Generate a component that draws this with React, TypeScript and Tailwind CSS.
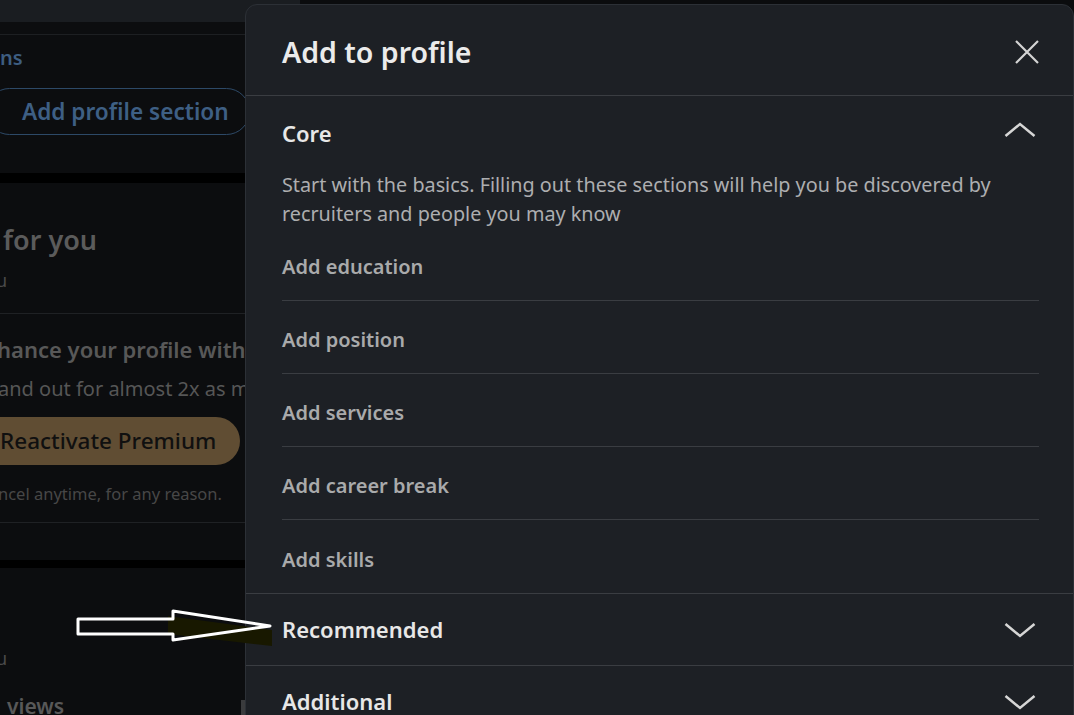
import React from "react";

function Chevron({ up }: { up?: boolean }) {
  return (
    <svg width="32" height="18" viewBox="0 0 32 18" fill="none" stroke="#d6d6d6" strokeWidth="2.5" strokeLinejoin="miter">
      {up ? <path d="M1.5 15 L16 3 L30.5 15" /> : <path d="M1.5 3 L16 15 L30.5 3" />}
    </svg>
  );
}

function Item({ label, last }: { label: string; last?: boolean }) {
  return (
    <div
      className={`h-[73px] pt-[6px] flex items-center ${last ? "h-[72px]" : "border-b border-[#3a3d42]"}`}
    >
      <span className="text-[20px] font-semibold text-[#a9aaab]">{label}</span>
    </div>
  );
}

function Section({ title, up }: { title: string; up?: boolean }) {
  return (
    <div className="h-[72px] pl-9 pr-[37px] flex items-center justify-between border-b border-[#3a3d42]">
      <span className="text-[22px] font-semibold text-[#e7e7e7]">{title}</span>
      <Chevron up={up} />
    </div>
  );
}

export default function App() {
  return (
    <div
      className="relative w-[1074px] h-[715px] overflow-hidden bg-[#0b0c0e]"
      style={{ fontFamily: '"Noto Sans", "Open Sans", sans-serif' }}
    >
      {/* dimmed page behind the modal */}
      <div className="w-[300px] flex flex-col">
        <div className="h-[22px] bg-[#1a1d21]" />
        <div className="h-[151px] bg-[#0c0d0f] flex flex-col">
          <div className="h-[13px] border-b border-[#1d1f22]" />
          <div className="mt-[9px] text-[20px] font-semibold text-[#3d5d80] leading-[28px]">ns</div>
          <div className="mt-[16px] -ml-[14px] w-[264px] h-[47px] rounded-full border-[1.5px] border-[#2d4967] flex items-center pl-[35px]">
            <span className="text-[22.6px] font-semibold text-[#3e5f84]">Add profile section</span>
          </div>
        </div>
        <div className="h-[10px] bg-black" />
        <div className="h-[377px] bg-[#0c0d0f] flex flex-col">
          <div className="mt-[39px] text-[27px] font-semibold text-[#5b5b5b] leading-[36px] pl-[3px]">for you</div>
          <div className="mt-[11px] text-[18px] text-[#4a4a4a] leading-[22px] -ml-[4px]">u</div>
          <div className="mt-[22px] border-b border-[#1f2124]" />
          <div className="mt-[20px] text-[22px] font-semibold text-[#585858] leading-[30px] whitespace-nowrap -ml-[3px]">hance your profile with</div>
          <div className="mt-[11px] text-[20px] text-[#565656] leading-[28px] whitespace-nowrap -ml-[2px]">and out for almost 2x as many</div>
          <div className="mt-[14px] -ml-[30px] w-[270px] h-[48px] rounded-full bg-[#604d33] flex items-center pl-[30px]">
            <span className="text-[22.5px] font-medium text-[#101010]">Reactivate Premium</span>
          </div>
          <div className="mt-[17px] text-[16.5px] text-[#474747] leading-[24px] -ml-[2px] whitespace-nowrap">ncel anytime, for any reason.</div>
          <div className="mt-[16px] border-b border-[#1f2124]" />
        </div>
        <div className="h-[8px] bg-black" />
        <div className="h-[200px] bg-[#0c0d0f] flex flex-col">
          <div className="mt-[78px] text-[18px] text-[#4a4a4a] leading-[24px] -ml-[4px]">u</div>
          <div className="mt-[21px] text-[21px] font-semibold text-[#585858] leading-[30px] pl-[7px]">views</div>
        </div>
      </div>
      <div className="absolute left-[241px] top-[700px] w-[4px] h-[15px] bg-[#3a3b3d]" />

      {/* modal */}
      <div className="absolute left-[245px] top-[4px] w-[829px] h-[780px] rounded-xl border border-[#2c3036] bg-[#1d2025]">
        <div className="h-[91px] pt-1 pl-9 pr-[34px] flex items-center justify-between border-b border-[#3a3d42]">
          <h2 className="text-[28.5px] font-semibold text-[#ebebeb]">Add to profile</h2>
          <svg width="24" height="24" viewBox="0 0 24 24" fill="none" stroke="#d4d4d4" strokeWidth="2.2">
            <path d="M1 1 L23 23 M23 1 L1 23" />
          </svg>
        </div>

        <div className="border-b border-[#3a3d42]">
          <div className="h-[74px] pl-9 pr-[37px] flex items-center justify-between">
            <span className="text-[22px] font-semibold text-[#e7e7e7]">Core</span>
            <div className="-mt-[6px]">
              <Chevron up />
            </div>
          </div>
          <p className="pl-9 pr-14 text-[19.8px] leading-[29px] text-[#adaeb0]">
            Start with the basics. Filling out these sections will help you be discovered by recruiters and people you may
            know
          </p>
          <div className="ml-9 mr-[34px]">
            <Item label="Add education" />
            <Item label="Add position" />
            <Item label="Add services" />
            <Item label="Add career break" />
            <Item label="Add skills" last />
          </div>
        </div>

        <Section title="Recommended" />
        <Section title="Additional" />
      </div>

      {/* annotation arrow */}
      <svg className="absolute left-0 top-0" width="300" height="715" viewBox="0 0 300 715">
        <polygon points="168,616 272,630 272,646 168,634" fill="#181800" />
        <polygon
          points="78,619 173,619 173,611 270,626 173,640 173,634 78,634"
          fill="none"
          stroke="#ffffff"
          strokeWidth="3"
          strokeLinejoin="round"
        />
      </svg>
    </div>
  );
}
